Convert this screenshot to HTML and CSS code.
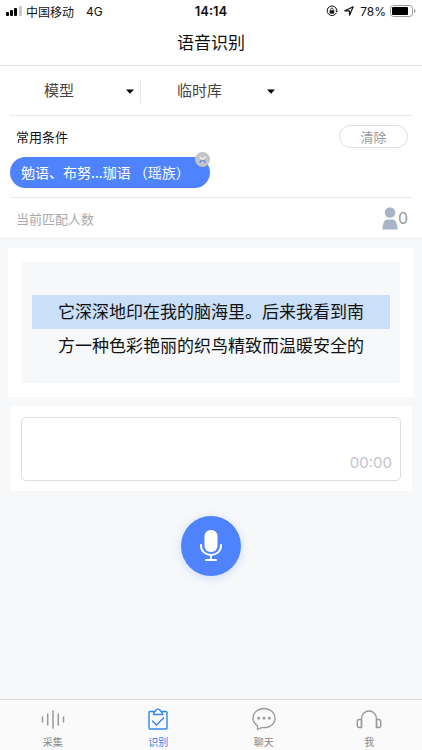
FILE: index.html
```html
<!DOCTYPE html>
<html lang="zh-CN">
<head>
<meta charset="utf-8">
<meta name="viewport" content="width=device-width, initial-scale=1">
<title>语音识别</title>
<link rel="stylesheet" href="styles.css">
</head>
<body>
<div class="status">
  <div class="status-side">
    <svg class="signal" width="17" height="10" viewBox="0 0 17 10" aria-hidden="true">
      <rect x="0" y="6" width="3" height="4" rx="1"/><rect x="4" y="4" width="3" height="6" rx="1"/><rect x="8" y="2" width="3" height="8" rx="1"/><rect x="13" y="0" width="3" height="10" rx="1" fill="#c8c8c8"/>
    </svg>
    <span>中国移动</span>
    <span class="network">4G</span>
  </div>
  <time class="clock">14:14</time>
  <div class="status-side status-right">
    <svg width="12" height="12" viewBox="0 0 12 12" fill="none" stroke="#111" aria-hidden="true">
      <path d="M10.3 7.8A4.8 4.8 0 1 1 10.7 5"/><path d="M9.2 5.4h3L10.7 7.5z" fill="#111" stroke="none"/><rect x="3.6" y="5.3" width="4.6" height="3.3" fill="#111" stroke="none"/><path d="M4.6 5.5V4.4a1.3 1.3 0 0 1 2.6 0v1.1" stroke-width=".8"/>
    </svg>
    <svg class="locate" width="10" height="10" viewBox="0 0 10 10" fill="none" stroke="#111" stroke-width="1.2" stroke-linejoin="round" aria-hidden="true"><path d="M9.2.8 5.5 9.2V4.8H.8z"/></svg>
    <span>78%</span>
    <svg class="battery" width="26" height="12" viewBox="0 0 26 12" aria-hidden="true">
      <rect x=".5" y=".5" width="22" height="11" rx="3" fill="none" stroke="#999"/><rect x="2" y="2" width="16" height="8" rx="1"/><path d="M24 4q1.500.6 1.500 2T24 8z" fill="#999"/>
    </svg>
  </div>
</div>
<header class="header"><h1>语音识别</h1></header>

<main>
  <section class="filters">
    <div class="pickers">
      <div class="picker">
        <select aria-label="模型"><option>模型</option></select>
        <svg class="caret" width="8" height="5" viewBox="0 0 8 5" aria-hidden="true"><path d="M0 .5h8L4 4.700z"/></svg>
      </div>
      <div class="picker picker-wide">
        <select aria-label="临时库"><option>临时库</option></select>
        <svg class="caret" width="8" height="5" viewBox="0 0 8 5" aria-hidden="true"><path d="M0 .5h8L4 4.700z"/></svg>
      </div>
    </div>
    <div class="conditions">
      <div class="row">
        <h2>常用条件</h2>
        <button class="clear" type="button">清除</button>
      </div>
      <div class="chip">
        <span>勉语、布努...珈语 （瑶族）</span>
        <button class="remove" type="button" aria-label="移除">
          <svg width="15" height="15" viewBox="0 0 15 15" fill="none"><path d="M4.500 10.500 7.500 7.500l3 3" stroke="#4e83fd" stroke-width="1.300"/><path d="m4.500 4.500 3 3 3-3" stroke="#f4f4f4" stroke-width="1.300"/></svg>
        </button>
      </div>
    </div>
    <div class="row matches">
      <span>当前匹配人数</span>
      <span class="count">
        <svg width="16" height="23" viewBox="0 0 16 23" fill="#a9b5c6" aria-hidden="true"><circle cx="8" cy="5.500" r="5.300"/><path d="M.5 22.500C.5 16.500 2.500 12.500 5 12.500h6c2.500 0 4.500 4 4.500 10z"/></svg>0</span>
    </div>
  </section>

  <section class="card">
    <div class="passage">
      <p class="line current">它深深地印在我的脑海里。后来我看到南</p>
      <p class="line">方一种色彩艳丽的织鸟精致而温暖安全的</p>
    </div>
  </section>

  <section class="card recorder">
    <div class="recording"><time>00:00</time></div>
  </section>

  <button class="mic" type="button" aria-label="录音">
    <svg width="24" height="32" viewBox="0 0 24 32" fill="none" stroke="#fff" stroke-width="2" stroke-linecap="round" aria-hidden="true"><rect x="5.500" y="0" width="13" height="22" rx="6" fill="#fff" stroke="none"/><path d="M2 15v1c0 5 4.500 9 10 9s10-4 10-9v-1M12 25v5M7 30h10"/></svg>
  </button>
</main>

<nav class="tabs">
  <a href="#collect">
    <svg width="24" height="24" viewBox="0 0 24 24" fill="none" stroke="#999" stroke-width="1.500" stroke-linecap="round" aria-hidden="true"><path d="M1.500 10v5M6.700 7v11M12 4v17M17.300 7v11M22.500 10v5"/></svg>
    <span>采集</span>
  </a>
  <a class="active" href="#recognize">
    <svg width="24" height="24" viewBox="0 0 24 24" fill="none" stroke="#3385ee" stroke-width="1.400" stroke-linejoin="round" stroke-linecap="round" aria-hidden="true"><path d="M7.500 4.500H4a1 1 0 0 0-1 1V21a1 1 0 0 0 1 1h16a1 1 0 0 0 1-1V5.500a1 1 0 0 0-1-1h-3.500"/><path d="M7.500 7.500q0-3 2-3.500a2.600 2.600 0 0 1 5 0q2 .5 2 3.500z"/><path d="m6.500 14 4 4L17.500 11"/></svg>
    <span>识别</span>
  </a>
  <a href="#chat">
    <svg width="24" height="24" viewBox="0 0 24 24" fill="none" stroke="#999" stroke-width="1.300" stroke-linejoin="round" aria-hidden="true"><path d="M5.500 22.500v-4C2.600 16.900 1 14.500 1 11.200 1 5.900 5.600 1.500 12 1.500s11 4.400 11 9.700-4.600 9.500-11 9.500h-2.500z"/><g fill="#999" stroke="none"><circle cx="6.700" cy="11.200" r="1.400"/><circle cx="12" cy="11.200" r="1.400"/><circle cx="17.300" cy="11.200" r="1.400"/></g></svg>
    <span>聊天</span>
  </a>
  <a href="#me">
    <svg width="26" height="24" viewBox="0 0 26 24" fill="none" stroke="#999" stroke-width="1.400" stroke-linejoin="round" aria-hidden="true"><path d="M5.500 20.500V11.500a7.500 7.500 0 0 1 15 0v9"/><path d="M5.500 12.500H3.300a2 2 0 0 0-2 2v4a2 2 0 0 0 2 2h2.200zM20.500 12.500h2.200a2 2 0 0 1 2 2v4a2 2 0 0 1-2 2h-2.200z"/></svg>
    <span>我</span>
  </a>
</nav>
</body>
</html>
```
FILE: styles.css
```css
* {
  box-sizing: border-box;
}

body {
  margin: 0;
  min-height: 100vh;
  display: flex;
  flex-direction: column;
  background: #f6f8fa;
  color: #111;
  font-family: Inter, "Noto Sans CJK SC", sans-serif;
  font-size: 13px;
}

h1, h2, p {
  margin: 0;
  font-weight: 400;
}

button, select {
  font: inherit;
  padding: 0;
  border: 0;
}

svg {
  display: block;
}

.status {
  display: grid;
  grid-template-columns: 1fr auto 1fr;
  align-items: center;
  height: 22px;
  padding: 0 6px;
  background: #fff;
  font-size: 12px;
}

.status-side {
  display: flex;
  align-items: center;
}

.signal {
  margin-right: 3px;
}

.network {
  margin-left: 12px;
}

.clock {
  font-size: 13px;
  font-weight: 600;
}

.status-right {
  justify-content: flex-end;
}

.locate {
  margin: 0 6px;
}

.battery {
  margin-left: 4px;
}

.header {
  height: 44px;
  background: #fff;
  border-bottom: 1px solid #dedede;
  text-align: center;
}

.header h1 {
  font-size: 17px;
  line-height: 43px;
}

main {
  flex: 1;
}

.filters {
  background: #fff;
  border-bottom: 1px solid #f0f0f0;
}

.pickers {
  display: flex;
  align-items: center;
  height: 50px;
  margin: 0 10px;
  border-bottom: 1px solid #e9e9e9;
}

.picker {
  position: relative;
  flex: 0 0 auto;
  width: 131px;
  border-right: 1px solid #e9e9e9;
}

.picker-wide {
  width: 140px;
  border-right: 0;
}

.picker select {
  display: block;
  width: 100%;
  height: 24px;
  padding-left: 34px;
  appearance: none;
  background: transparent;
  color: #444;
  font-size: 15px;
}

.picker-wide select {
  padding-left: 36px;
}

.caret {
  position: absolute;
  right: 6px;
  top: 10px;
  pointer-events: none;
}

.conditions {
  margin: 0 10px;
  padding: 9px 4px 9px 0;
  border-bottom: 1px solid #e9e9e9;
}

.row {
  display: flex;
  align-items: center;
  justify-content: space-between;
}

.row h2 {
  padding-left: 6px;
  font-size: 13px;
}

.clear {
  width: 69px;
  height: 23px;
  border: 1px solid #ddd;
  border-radius: 12px;
  background: #fff;
  color: #999;
  line-height: 20px;
}

.chip {
  position: relative;
  width: fit-content;
  height: 31px;
  margin-top: 9px;
  padding: 0 20px 0 11px;
  border-radius: 16px;
  background: #4e83fd;
  color: #fff;
  font-family: "Noto Sans CJK SC", sans-serif;
  font-size: 14px;
  line-height: 31px;
}

.remove {
  position: absolute;
  top: -5px;
  right: 0;
  border-radius: 50%;
  background: #c3c3c5;
}

.matches {
  height: 40px;
  padding: 0 14px 0 16px;
  color: #aaa;
}

.count {
  display: flex;
  align-items: center;
  color: #999;
  font-size: 16px;
}

.card {
  margin: 9px 8px;
  padding: 14px;
  background: #fff;
}

.passage {
  padding: 33px 10px 20px;
  background: #f6f8fa;
}

.line {
  height: 34px;
  font-size: 17px;
  line-height: 34px;
  text-align: center;
  white-space: nowrap;
}

.current {
  background: #cadff8;
}

.recorder {
  margin: 9px 10px 25px;
  padding: 11px 11px 10px;
}

.recording {
  display: flex;
  align-items: flex-end;
  justify-content: flex-end;
  height: 64px;
  padding: 8px;
  border: 1px solid #ddd;
  border-radius: 5px;
  color: #bfc3cc;
  font-size: 15px;
  line-height: 18px;
}

.mic {
  display: grid;
  place-items: center;
  width: 60px;
  height: 60px;
  margin: 0 auto;
  border-radius: 50%;
  background: #4e83fd;
  box-shadow: 0 2px 8px #4e83fd40;
}

.tabs {
  display: grid;
  grid-template-columns: repeat(4, 1fr);
  height: 51px;
  background: #fafafa;
  border-top: 1px solid #d8d9dc;
}

.tabs a {
  display: flex;
  flex-direction: column;
  align-items: center;
  padding-top: 7px;
  color: #888;
  font-size: 10px;
  line-height: 12px;
  text-decoration: none;
}

.tabs span {
  margin-top: 5px;
}

.tabs .active {
  color: #3385ee;
}
```
